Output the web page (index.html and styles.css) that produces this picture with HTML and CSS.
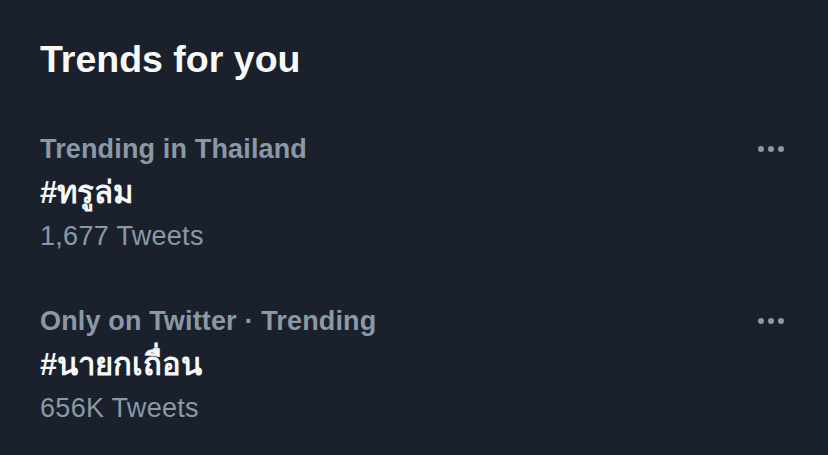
FILE: index.html
```html
<!DOCTYPE html>
<html lang="en">
<head>
    <meta charset="UTF-8">
    <meta name="viewport" content="width=device-width, initial-scale=1">
    <title>Trends for you</title>
    <link rel="stylesheet" href="styles.css">
</head>
<body>
    <section class="trends">
        <h2 class="trends-title">Trends for you</h2>

        <div class="trend">
            <div class="trend-text">
                <div class="trend-meta">Trending in Thailand</div>
                <div class="trend-tag">#ทรูล่ม</div>
                <div class="trend-count">1,677 Tweets</div>
            </div>
            <div class="trend-more">
                <span class="dot"></span><span class="dot"></span><span class="dot"></span>
            </div>
        </div>

        <div class="trend">
            <div class="trend-text">
                <div class="trend-meta">Only on Twitter · Trending</div>
                <div class="trend-tag">#นายกเถื่อน</div>
                <div class="trend-count">656K Tweets</div>
            </div>
            <div class="trend-more">
                <span class="dot"></span><span class="dot"></span><span class="dot"></span>
            </div>
        </div>
    </section>
</body>
</html>
```

FILE: styles.css
```css
body {
    margin: 0;
    background-color: #1a212c;
    font-family: 'Liberation Sans', Arial, 'Noto Sans', sans-serif;
    color: #f7f9f9;
    min-height: 100vh;
}

.trends {
    padding: 37px 44px 0 40px;
}

.trends-title {
    margin: 0 0 25px;
    font-size: 37.5px;
    line-height: 44px;
    font-weight: 700;
}

.trend {
    display: flex;
    align-items: flex-start;
    justify-content: space-between;
    padding: 23px 0 22px;
}

.trend-meta {
    font-size: 27px;
    line-height: 40px;
    font-weight: 700;
    letter-spacing: 0.15px;
    color: #8b98a5;
}

.trend-tag {
    font-size: 31px;
    line-height: 47px;
    font-weight: 700;
}

.trend-count {
    font-size: 27px;
    line-height: 40px;
    letter-spacing: 0.3px;
    color: #8b98a5;
}

.trend-more {
    display: flex;
    gap: 4px;
    height: 40px;
    align-items: center;
}

.dot {
    width: 6px;
    height: 6px;
    border-radius: 50%;
    background-color: #8b98a5;
}
```
